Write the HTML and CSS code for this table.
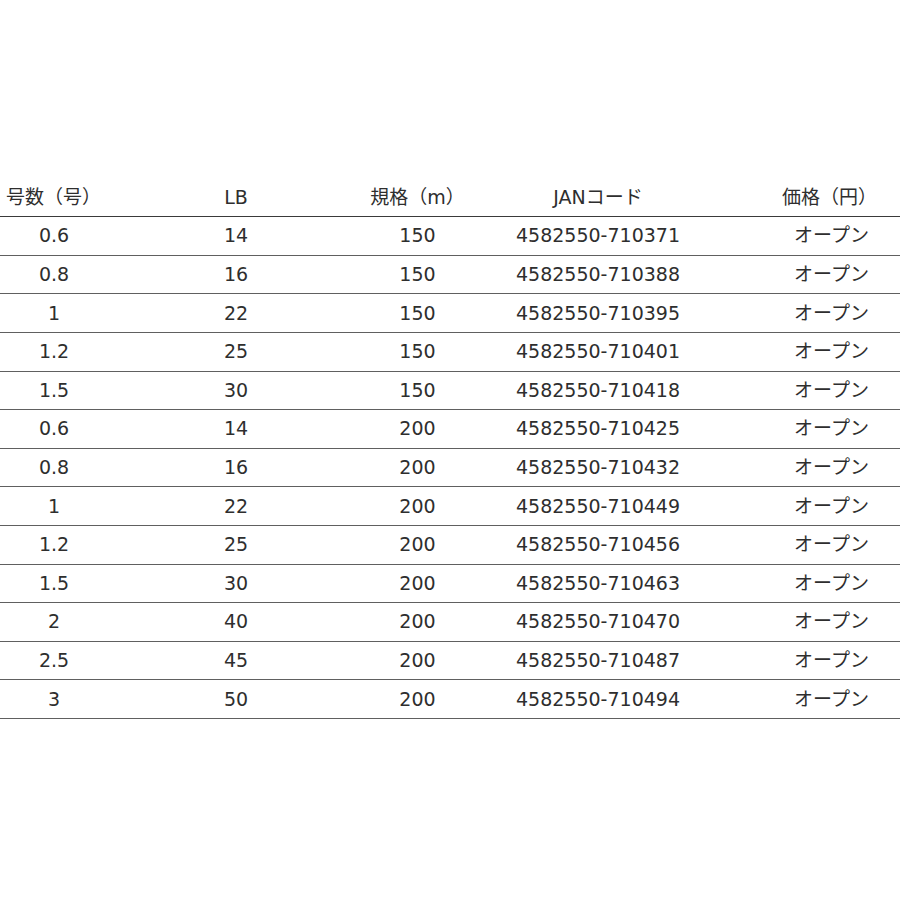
FILE: index.html
```html
<!DOCTYPE html>
<html lang="ja">
<head>
<meta charset="utf-8">
<link rel="stylesheet" href="styles.css">
</head>
<body>
<div class="spec" role="table">
  <div class="row head" role="row"><div class="c1">号数（号）</div><div class="c2">LB</div><div class="c3">規格（m）</div><div class="c4">JANコード</div><div class="c5">価格（円）</div></div>
  <div class="row" role="row"><div class="c1">0.6</div><div class="c2">14</div><div class="c3">150</div><div class="c4">4582550-710371</div><div class="c5">オープン</div></div>
  <div class="row" role="row"><div class="c1">0.8</div><div class="c2">16</div><div class="c3">150</div><div class="c4">4582550-710388</div><div class="c5">オープン</div></div>
  <div class="row" role="row"><div class="c1">1</div><div class="c2">22</div><div class="c3">150</div><div class="c4">4582550-710395</div><div class="c5">オープン</div></div>
  <div class="row" role="row"><div class="c1">1.2</div><div class="c2">25</div><div class="c3">150</div><div class="c4">4582550-710401</div><div class="c5">オープン</div></div>
  <div class="row" role="row"><div class="c1">1.5</div><div class="c2">30</div><div class="c3">150</div><div class="c4">4582550-710418</div><div class="c5">オープン</div></div>
  <div class="row" role="row"><div class="c1">0.6</div><div class="c2">14</div><div class="c3">200</div><div class="c4">4582550-710425</div><div class="c5">オープン</div></div>
  <div class="row" role="row"><div class="c1">0.8</div><div class="c2">16</div><div class="c3">200</div><div class="c4">4582550-710432</div><div class="c5">オープン</div></div>
  <div class="row" role="row"><div class="c1">1</div><div class="c2">22</div><div class="c3">200</div><div class="c4">4582550-710449</div><div class="c5">オープン</div></div>
  <div class="row" role="row"><div class="c1">1.2</div><div class="c2">25</div><div class="c3">200</div><div class="c4">4582550-710456</div><div class="c5">オープン</div></div>
  <div class="row" role="row"><div class="c1">1.5</div><div class="c2">30</div><div class="c3">200</div><div class="c4">4582550-710463</div><div class="c5">オープン</div></div>
  <div class="row" role="row"><div class="c1">2</div><div class="c2">40</div><div class="c3">200</div><div class="c4">4582550-710470</div><div class="c5">オープン</div></div>
  <div class="row" role="row"><div class="c1">2.5</div><div class="c2">45</div><div class="c3">200</div><div class="c4">4582550-710487</div><div class="c5">オープン</div></div>
  <div class="row" role="row"><div class="c1">3</div><div class="c2">50</div><div class="c3">200</div><div class="c4">4582550-710494</div><div class="c5">オープン</div></div>
</div>
</body>
</html>
```
FILE: styles.css
```css
html, body {
  margin: 0;
  padding: 0;
  background: #ffffff;
}
body {
  width: 900px;
  height: 900px;
  overflow: hidden;
  font-family: "DejaVu Sans", "Noto Sans CJK JP", sans-serif;
  font-size: 19px;
  color: #2e2e2e;
}
.spec {
  padding-top: 178.6px;
}
.row {
  display: grid;
  grid-template-columns: 145px 182px 181px 205px 187px;
  align-items: center;
  height: 38.6px;
  box-sizing: border-box;
  border-bottom: 1px solid #606060;
  text-align: center;
  line-height: 1;
}
.row.head {
  border-bottom-color: #3a3a3a;
}
.c1 { padding-right: 37px; }
.c4 { padding-right: 25px; }
.c5 { padding-left: 50px; }
.head .c1 { padding-right: 38px; }
.head .c3 { padding-right: 0; }
.head .c5 { padding-left: 46px; }
```
